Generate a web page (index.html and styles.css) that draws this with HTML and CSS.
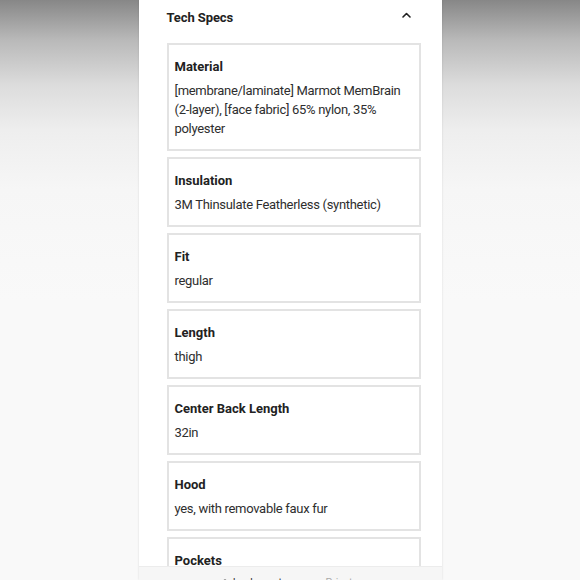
FILE: index.html
```html
<!DOCTYPE html>
<html lang="en">
<head>
<meta charset="utf-8">
<title>Tech Specs</title>
<link rel="stylesheet" href="styles.css">
</head>
<body>
<div class="page">
  <main class="sheet">
    <div class="content">
      <div class="section-head">
        <h2 class="section-title">Tech Specs</h2>
        <svg class="chevron" width="9" height="6" viewBox="0 0 9 6" aria-hidden="true">
          <path d="M1 5 L4.5 1.5 L8 5" fill="none" stroke="#222" stroke-width="1.6" stroke-linecap="round" stroke-linejoin="round"/>
        </svg>
      </div>
      <div class="spec-list">
        <div class="spec">
          <div class="spec-name">Material</div>
          <div class="spec-value">[membrane/laminate] Marmot MemBrain (2-layer), [face fabric] 65% nylon, 35% polyester</div>
        </div>
        <div class="spec">
          <div class="spec-name">Insulation</div>
          <div class="spec-value">3M Thinsulate Featherless (synthetic)</div>
        </div>
        <div class="spec">
          <div class="spec-name">Fit</div>
          <div class="spec-value">regular</div>
        </div>
        <div class="spec">
          <div class="spec-name">Length</div>
          <div class="spec-value">thigh</div>
        </div>
        <div class="spec">
          <div class="spec-name">Center Back Length</div>
          <div class="spec-value">32in</div>
        </div>
        <div class="spec">
          <div class="spec-name">Hood</div>
          <div class="spec-value">yes, with removable faux fur</div>
        </div>
        <div class="spec">
          <div class="spec-name">Pockets</div>
          <div class="spec-value">2 hand, 1 chest, 1 interior</div>
        </div>
      </div>
    </div>
    <footer class="urlbar">
      <svg class="lock" width="6" height="8" viewBox="0 0 6 8" aria-hidden="true">
        <path d="M1.3 3.6 V2.5 a1.7 1.7 0 0 1 3.4 0 V3.6" fill="none" stroke="#555" stroke-width="0.9"/>
        <rect x="0.4" y="3.6" width="5.2" height="4" rx="0.7" fill="#555"/>
      </svg>
      <span class="domain">backcountry.com</span>
      <span class="private">Private</span>
    </footer>
  </main>
</div>
</body>
</html>
```

FILE: styles.css
```css
* { box-sizing: border-box; }

html, body {
  margin: 0;
  padding: 0;
  height: 100%;
}

body {
  background: linear-gradient(180deg, #878787 0px, #b9b9b9 40px, #dcdcdc 85px, #eeeeee 130px, #f6f6f6 190px, #f9f9f9 300px, #f9f9f9 100%);
  font-family: Roboto, "Liberation Sans", Arial, sans-serif;
  color: #333;
  overflow: hidden;
}

.page {
  height: 100%;
  display: flex;
  justify-content: center;
}

.sheet {
  width: 303px;
  height: 100%;
  background: #fff;
  display: flex;
  flex-direction: column;
  box-shadow: 0 0 2px rgba(0, 0, 0, 0.12);
}

.content {
  flex: 1;
  overflow: hidden;
  padding: 0 21px 0 28px;
}

.section-head {
  height: 35px;
  margin-bottom: 8px;
  display: flex;
  align-items: center;
  justify-content: space-between;
}

.section-title {
  margin: 0;
  font-size: 13px;
  font-weight: 700;
  color: #222;
  letter-spacing: -0.1px;
}

.chevron {
  margin-right: 10px;
  margin-bottom: 6px;
}

.spec-list {
  display: flex;
  flex-direction: column;
  gap: 6px;
}

.spec {
  border: 2px solid #e3e3e3;
  padding: 12px 6px 11px 6px;
}

.spec-name {
  font-size: 13px;
  line-height: 19px;
  font-weight: 700;
  color: #222;
  margin-bottom: 5px;
}

.spec-value {
  font-size: 13px;
  line-height: 19px;
  letter-spacing: -0.3px;
  color: #2e2e2e;
}

.urlbar {
  height: 14px;
  flex: none;
  background: #f6f6f6;
  border-top: 1px solid #ececec;
  display: flex;
  justify-content: center;
  align-items: flex-start;
  gap: 4px;
  padding-top: 10px;
  overflow: hidden;
  font-size: 10.5px;
  line-height: 12px;
}

.lock { margin-top: 2px; margin-right: 1px; }

.domain { color: #333; margin-right: 8px; }

.private { color: #aaa; }
```
